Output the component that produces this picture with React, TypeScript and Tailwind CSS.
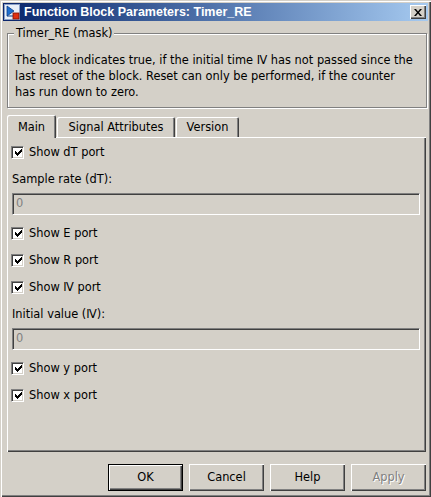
import type { ReactNode } from 'react'

const face = 'bg-[#d4d0c8]'
const font = "font-['DejaVu_Sans',sans-serif] text-[11.4px] text-black"

function Check({ label }: { label: ReactNode }) {
  return (
    <div className="flex h-[27px] items-center">
      <span className="flex h-[13px] w-[13px] items-center justify-center border border-t-[#808080] border-l-[#808080] border-b-white border-r-white bg-white shadow-[inset_1px_1px_0_#404040,inset_-1px_-1px_0_#d4d0c8]">
        <svg width="7" height="7" viewBox="0 0 7 7" className="ml-[1px]">
          <path d="M0 2h1v1h1v1h1v-1h1v-1h1v-1h1v-1h1v3h-1v1h-1v1h-1v1h-1v1h-1v-1h-1v-1h-1z" fill="#000" />
        </svg>
      </span>
      <span className="ml-[5px]">{label}</span>
    </div>
  )
}

function Field({ label, value }: { label: ReactNode; value: string }) {
  return (
    <>
      <div className="flex h-[27px] items-center pl-[1px]">{label}</div>
      <div className="ml-[1px] flex h-[22px] w-[408px] items-center border border-t-[#808080] border-l-[#808080] border-b-white border-r-white shadow-[inset_1px_1px_0_#404040,inset_-1px_-1px_0_#d4d0c8] pl-[3px] text-[#808080]">
        {value}
      </div>
      <div className="h-[5px]" />
    </>
  )
}

function Button({ children, isDefault, disabled }: { children: ReactNode; isDefault?: boolean; disabled?: boolean }) {
  return (
    <div
      className={`flex h-[27px] w-[75px] items-center justify-center ${face} ${
        isDefault
          ? 'border border-black shadow-[inset_1px_1px_0_#fff,inset_-1px_-1px_0_#404040,inset_-2px_-2px_0_#808080]'
          : 'shadow-[inset_1px_1px_0_#fff,inset_-1px_-1px_0_#404040,inset_-2px_-2px_0_#808080]'
      } ${disabled ? 'text-[#808080] [text-shadow:1px_1px_0_#fff]' : ''}`}
    >
      {children}
    </div>
  )
}

export default function App() {
  return (
    <div
      className={`h-[497px] w-[431px] overflow-hidden ${face} ${font} p-[3px] shadow-[inset_1px_1px_0_#d4d0c8,inset_2px_2px_0_#fff,inset_-1px_-1px_0_#404040,inset_-2px_-2px_0_#808080]`}
    >
      {/* Title bar */}
      <div className="flex h-[18px] items-center bg-gradient-to-r from-[#0a246a] to-[#a6caf0] pl-[1px] pr-[2px]">
        <svg width="16" height="16" viewBox="0 0 16 16">
          <rect x="0.5" y="0.5" width="15" height="15" fill="#e8eef8" stroke="#8aa0c8" />
          <path d="M3 2v10l7-5z" fill="#1e6fd0" stroke="#0b3f8a" strokeWidth="0.8" />
          <path d="M3 12h6" stroke="#0b3f8a" strokeWidth="1" />
          <rect x="9" y="9" width="6" height="6" fill="#e03010" stroke="#801000" strokeWidth="0.8" />
        </svg>
        <span className="ml-[4px] font-['Liberation_Sans',sans-serif] text-[12.5px] font-bold text-white">
          Function Block Parameters: Timer_RE
        </span>
        <div className="ml-auto flex h-[14px] w-[16px] items-center justify-center bg-[#d4d0c8] shadow-[inset_1px_1px_0_#fff,inset_-1px_-1px_0_#404040,inset_-2px_-2px_0_#808080]">
          <svg width="8" height="7" viewBox="0 0 8 7">
            <path d="M0 0h2l2 2.5 2-2.5h2l-3 3.5 3 3.5h-2l-2-2.5-2 2.5h-2l3-3.5z" fill="#000" />
          </svg>
        </div>
      </div>

      <div className="pl-[4px]">
        {/* Mask group box */}
        <div className="relative mt-[12px] h-[75px] w-[420px] border border-[#808080] pl-[7px] pt-[18px] shadow-[inset_1px_1px_0_#fff,1px_1px_0_#fff] leading-[16px]">
          <span className={`absolute left-[6px] top-[-9px] px-[2px] ${face}`}>Timer_RE (mask)</span>
          <p>
            The block indicates true, if the initial time Ⅳ has not passed since the
            <br />
            last reset of the block. Reset can only be performed, if the counter
            <br />
            has run down to zero.
          </p>
        </div>

        {/* Tabs */}
        <div className="mt-[7px] flex h-[22px] items-end">
          <div className={`relative z-10 mb-[-1px] flex h-[23px] w-[49px] items-center justify-center rounded-t-[2px] pt-[2px] ${face} shadow-[inset_1px_1px_0_#fff,inset_-1px_0_0_#404040,inset_-2px_0_0_#808080]`}>
            Main
          </div>
          <div className={`ml-[1px] flex h-[20px] w-[118px] items-center justify-center rounded-t-[2px] pt-[2px] ${face} shadow-[inset_1px_1px_0_#fff,inset_-1px_0_0_#404040,inset_-2px_0_0_#808080]`}>
            Signal Attributes
          </div>
          <div className={`ml-[1px] flex h-[20px] w-[63px] items-center justify-center rounded-t-[2px] pt-[2px] ${face} shadow-[inset_1px_1px_0_#fff,inset_-1px_0_0_#404040,inset_-2px_0_0_#808080]`}>
            Version
          </div>
        </div>

        {/* Tab panel */}
        <div className="h-[315px] w-[419px] pl-[4px] pt-[2px] shadow-[inset_1px_1px_0_#fff,inset_-1px_-1px_0_#404040,inset_-2px_-2px_0_#808080]">
          <Check label="Show dT port" />
          <Field label="Sample rate (dT):" value="0" />
          <Check label="Show E port" />
          <Check label="Show R port" />
          <Check label="Show Ⅳ port" />
          <Field label="Initial value (Ⅳ):" value="0" />
          <Check label="Show y port" />
          <Check label="Show x port" />
        </div>

        {/* Buttons */}
        <div className="mt-[12px] flex w-[419px] justify-end gap-[6px]">
          <Button isDefault>OK</Button>
          <Button>Cancel</Button>
          <Button>Help</Button>
          <Button disabled>Apply</Button>
        </div>
      </div>
    </div>
  )
}
